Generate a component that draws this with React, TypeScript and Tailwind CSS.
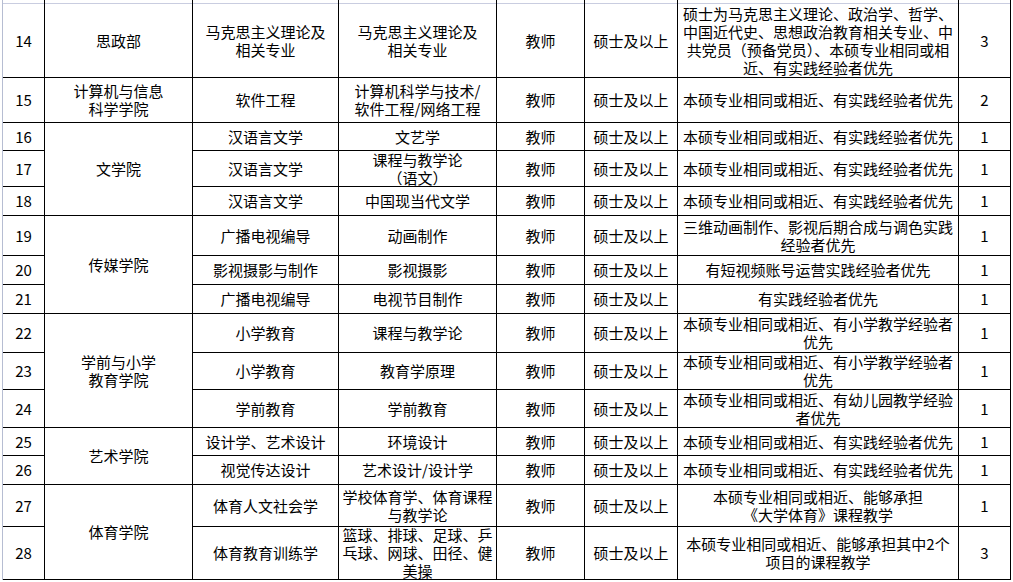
import React from "react";

type Row = {
  n: number;
  college?: string;
  span?: number;
  major: string;
  spec: string;
  desc: string;
  count: number;
};

const std = "本硕专业相同或相近、有实践经验者优先";

const rows: Row[] = [
  {
    n: 14,
    college: "思政部",
    major: "马克思主义理论及\n相关专业",
    spec: "马克思主义理论及\n相关专业",
    desc: "硕士为马克思主义理论、政治学、哲学、\n中国近代史、思想政治教育相关专业、中\n共党员（预备党员）、本硕专业相同或相\n近、有实践经验者优先",
    count: 3,
  },
  {
    n: 15,
    college: "计算机与信息\n科学学院",
    major: "软件工程",
    spec: "计算机科学与技术/\n软件工程/网络工程",
    desc: std,
    count: 2,
  },
  { n: 16, college: "文学院", span: 3, major: "汉语言文学", spec: "文艺学", desc: std, count: 1 },
  { n: 17, major: "汉语言文学", spec: "课程与教学论\n（语文）", desc: std, count: 1 },
  { n: 18, major: "汉语言文学", spec: "中国现当代文学", desc: std, count: 1 },
  {
    n: 19,
    college: "传媒学院",
    span: 3,
    major: "广播电视编导",
    spec: "动画制作",
    desc: "三维动画制作、影视后期合成与调色实践\n经验者优先",
    count: 1,
  },
  { n: 20, major: "影视摄影与制作", spec: "影视摄影", desc: "有短视频账号运营实践经验者优先", count: 1 },
  { n: 21, major: "广播电视编导", spec: "电视节目制作", desc: "有实践经验者优先", count: 1 },
  {
    n: 22,
    college: "学前与小学\n教育学院",
    span: 3,
    major: "小学教育",
    spec: "课程与教学论",
    desc: "本硕专业相同或相近、有小学教学经验者\n优先",
    count: 1,
  },
  {
    n: 23,
    major: "小学教育",
    spec: "教育学原理",
    desc: "本硕专业相同或相近、有小学教学经验者\n优先",
    count: 1,
  },
  {
    n: 24,
    major: "学前教育",
    spec: "学前教育",
    desc: "本硕专业相同或相近、有幼儿园教学经验\n者优先",
    count: 1,
  },
  { n: 25, college: "艺术学院", span: 2, major: "设计学、艺术设计", spec: "环境设计", desc: std, count: 1 },
  { n: 26, major: "视觉传达设计", spec: "艺术设计/设计学", desc: std, count: 1 },
  {
    n: 27,
    college: "体育学院",
    span: 2,
    major: "体育人文社会学",
    spec: "学校体育学、体育课程\n与教学论",
    desc: "本硕专业相同或相近、能够承担\n《大学体育》课程教学",
    count: 1,
  },
  {
    n: 28,
    major: "体育教育训练学",
    spec: "篮球、排球、足球、乒\n乓球、网球、田径、健\n美操",
    desc: "本硕专业相同或相近、能够承担其中2个\n项目的课程教学",
    count: 3,
  },
];

const cell =
  "flex items-center justify-center overflow-visible whitespace-pre-line border-b border-black bg-white text-center";

function Cell({ children, className = "" }: { children: React.ReactNode; className?: string }) {
  return <div className={`${cell} ${className}`}>{children}</div>;
}

export default function App() {
  return (
    <div
      className="h-[582px] w-[1013px] overflow-hidden bg-white text-[15px] leading-[18px] text-black"
      style={{ fontFamily: '"Noto Sans CJK SC", "Noto Sans", sans-serif' }}
    >
      <div className="ml-[2px] grid w-[1009px] grid-cols-[41px_147px_145px_157px_87px_92px_280px_51px] grid-rows-[4px_74px_45px_28px_36px_29px_40px_29px_29px_39px_37px_38px_28px_29px_42px_53px] gap-x-px border-l border-r border-l-[#b6bdd2] border-r-black bg-black">
        {Array.from({ length: 8 }).map((_, i) => (
          <div key={i} className="border-b border-[#c9cde0] bg-white" />
        ))}
        {rows.map((r) => (
          <React.Fragment key={r.n}>
            <Cell>{r.n}</Cell>
            {r.college && (
              <Cell
                className={
                  r.span === 3 ? "row-span-3" : r.span === 2 ? "row-span-2" : ""
                }
              >
                {r.college}
              </Cell>
            )}
            <Cell>{r.major}</Cell>
            <Cell>{r.spec}</Cell>
            <Cell>教师</Cell>
            <Cell>硕士及以上</Cell>
            <Cell>{r.desc}</Cell>
            <Cell>{r.count}</Cell>
          </React.Fragment>
        ))}
      </div>
    </div>
  );
}
